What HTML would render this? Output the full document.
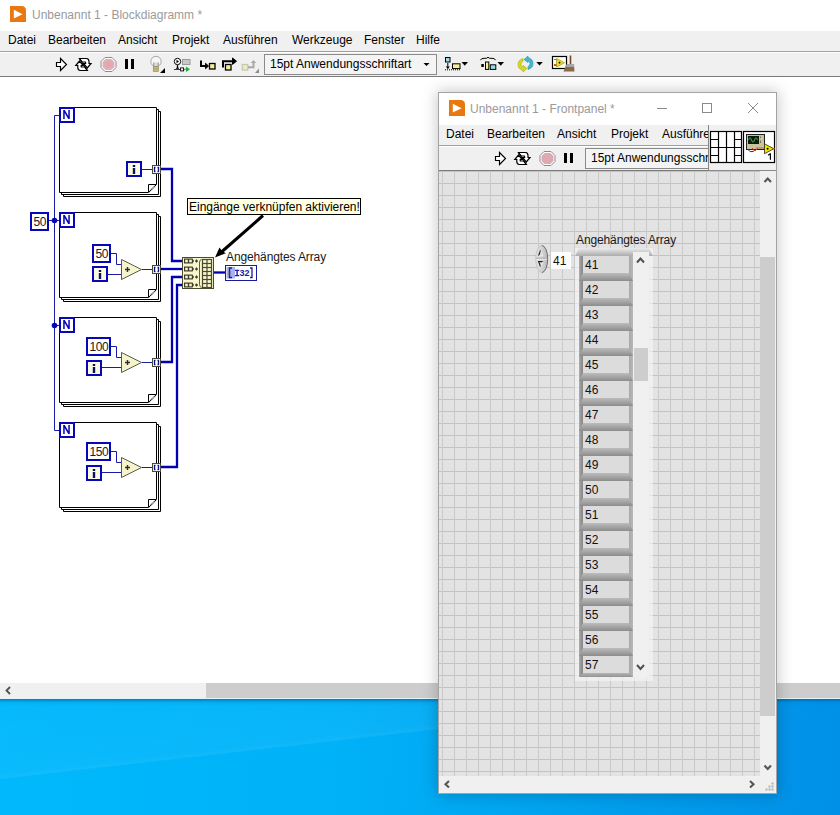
<!DOCTYPE html>
<html><head><meta charset="utf-8">
<style>
*{box-sizing:border-box}
html,body{margin:0;padding:0}
body{width:840px;height:815px;position:relative;overflow:hidden;background:#fff;font-family:"Liberation Sans",sans-serif;font-size:12px;color:#000}
.a{position:absolute}
.t{position:absolute;white-space:nowrap;line-height:14px;font-size:12px}
</style></head><body>

<!-- ============ BLOCK DIAGRAM WINDOW ============ -->
<div class="a" style="left:0;top:0;width:840px;height:31px;background:#fff"></div>
<svg class="a" style="left:10px;top:6px" width="16" height="16" viewBox="0 0 16 16"><path d="M0 0H11.5Q16 0 16 4.5V16H0Z" fill="#e8780f"/><path d="M3.8 3.8L12.6 8.2L3.8 12.6Z" fill="#fff"/></svg>
<div class="t" style="left:32px;top:8px;color:#9a9a9a">Unbenannt 1 - Blockdiagramm *</div>

<div class="a" style="left:0;top:31px;width:840px;height:20px;background:#f0f0f0"></div>
<div class="t" style="left:8px;top:33px">Datei</div>
<div class="t" style="left:48px;top:33px">Bearbeiten</div>
<div class="t" style="left:118px;top:33px">Ansicht</div>
<div class="t" style="left:172px;top:33px">Projekt</div>
<div class="t" style="left:223px;top:33px">Ausführen</div>
<div class="t" style="left:292px;top:33px">Werkzeuge</div>
<div class="t" style="left:364px;top:33px">Fenster</div>
<div class="t" style="left:416px;top:33px">Hilfe</div>

<div class="a" style="left:0;top:51px;width:840px;height:1px;background:#a0a0a0"></div>
<div class="a" style="left:0;top:52px;width:840px;height:24px;background:#f0f0f0;border-top:1px solid #fff"></div>
<div class="a" style="left:0;top:76px;width:840px;height:1px;background:#7a7a7a"></div>

<!-- toolbar icons -->
<svg class="a" style="left:0;top:52px" width="600" height="24" viewBox="0 52 600 24">
 <!-- run -->
 <path d="M56.5 62.5H60.5V58.5L66.5 64.5L60.5 70.5V66.5H56.5Z" fill="#fff" stroke="#000" stroke-width="1.15"/>
 <!-- run continuously -->
 <g fill="#fff" stroke="#000" stroke-width="1.2" stroke-linejoin="miter">
  <path d="M79.5 58.5H86.5Q89 58.8 89 61.5V63.5H91L87.3 68L83.6 63.5H85.6V62.3Q85.6 62 85 62H82.3Z"/>
  <path d="M87.3 70.5H80.3Q77.8 70.2 77.8 67.5V65.5H75.8L79.5 61L83.2 65.5H81.2V66.7Q81.2 67 81.8 67H84.5Z"/>
 </g>
 <path d="M79.3 58.3L87.5 70.7" stroke="#000" stroke-width="1.1"/>
 <!-- abort -->
 <defs><radialGradient id="stopg" cx="0.5" cy="0.5" r="0.6"><stop offset="0" stop-color="#e8a0a8"/><stop offset="1" stop-color="#d8b8bc"/></radialGradient></defs>
 <path d="M105 57.5H112L116 61.5V67.5L112 71.5H105L101 67.5V61.5Z" fill="#fff" stroke="#8c8c8c" stroke-width="1"/>
 <path d="M105.6 59H111.4L114.5 62.1V66.9L111.4 70H105.6L102.5 66.9V62.1Z" fill="url(#stopg)"/>
 <!-- pause -->
 <rect x="125" y="59" width="3" height="10" fill="#000"/><rect x="131" y="59" width="3" height="10" fill="#000"/>
 <!-- bulb -->
 <circle cx="156" cy="61.5" r="5.2" fill="#f6f6f6" stroke="#a8a8a8" stroke-width="1"/>
 <path d="M153.8 62.5V66.5H158.2V62.5" fill="#dcdcdc" stroke="#909090" stroke-width="1"/>
 <rect x="153.3" y="66.8" width="5" height="4.6" fill="#d0c880" stroke="#9a9058" stroke-width="0.7"/><path d="M153.3 68.4H158.3M153.3 69.9H158.3" stroke="#9a9058" stroke-width="0.6"/>
 <path d="M160 73H165V68Z" fill="#000"/>
 <!-- retain wire values -->
 <circle cx="177.5" cy="61.5" r="3.2" fill="#fff" stroke="#000" stroke-width="1"/>
 <path d="M176.5 59.8L179 61.5L176.5 63.2Z" fill="#000"/>
 <rect x="182.5" y="59.5" width="7.5" height="5" fill="#c8c8c8" stroke="#9a9a9a" stroke-width="1"/>
 <path d="M177.5 65V68.5" stroke="#000" stroke-width="1.2"/><path d="M176 68.2H179" stroke="#000" stroke-width="1"/>
 <path d="M174 69.5H180.5" stroke="#2030a0" stroke-width="1"/>
 <rect x="180.6" y="67.9" width="3" height="3" fill="#fff" stroke="#000" stroke-width="0.9"/>
 <path d="M184 69.3H186.5" stroke="#20a030" stroke-width="1"/><path d="M186 66.5L190 69.3L186 72Z" fill="#20b030"/>
 <!-- step into -->
 <path d="M201 60.5V66H206" fill="none" stroke="#000" stroke-width="2"/><path d="M205.5 63.3L208.5 66L205.5 68.7Z" fill="#000" stroke="#000" stroke-width="1"/>
 <rect x="209.5" y="63.5" width="5.5" height="5.5" fill="#f4f098" stroke="#000" stroke-width="1.3"/>
 <!-- step over -->
 <path d="M223 67.5V61.2H233" fill="none" stroke="#000" stroke-width="2"/><path d="M232.5 58L236.5 61.2L232.5 64.4Z" fill="#000" stroke="#000" stroke-width="1"/>
 <rect x="225.5" y="64.5" width="5.5" height="5.5" fill="#f4f098" stroke="#000" stroke-width="1.3"/>
 <!-- step out disabled -->
 <rect x="242.3" y="64.5" width="5.5" height="5.5" fill="#ecebc8" stroke="#c8c8b0" stroke-width="1.3"/>
 <path d="M248 67.3H253.5V62.5" fill="none" stroke="#a8a8a8" stroke-width="2"/><path d="M250.7 63L253.5 60L256.3 63Z" fill="#a8a8a8"/>
 <path d="M255 73H259V68.5Z" fill="#8c8c8c"/>
 <!-- dropdown -->
 <rect x="264.5" y="54.5" width="172" height="20" fill="#f4f4f4" stroke="#8a8a8a" stroke-width="1"/>
 <path d="M423.5 63H429.5L426.5 66Z" fill="#000"/>
 <!-- align -->
 <rect x="445.5" y="57.5" width="4.5" height="4.5" fill="#98dce6" stroke="#000" stroke-width="1"/>
 <path d="M447.8 63V68.5" stroke="#000" stroke-width="1"/><path d="M445.8 66.5L447.8 69L449.8 66.5Z" fill="#000"/>
 <rect x="452.5" y="63.8" width="7.5" height="4.8" fill="#f4f098" stroke="#000" stroke-width="1"/>
 <path d="M445 69.8H460" stroke="#000" stroke-width="1" stroke-dasharray="1 1"/>
 <path d="M461.5 62H468L464.75 65.7Z" fill="#000"/>
 <!-- distribute -->
 <path d="M480.5 60.2Q481 58.3 484 58.3H486.5L488 57.2L489.5 58.3H492Q495 58.3 495.5 60.2" fill="none" stroke="#000" stroke-width="1"/>
 <rect x="481.3" y="64" width="2.5" height="3" fill="#000"/>
 <rect x="485.5" y="62" width="3.3" height="7.4" fill="#f4f098" stroke="#000" stroke-width="1"/>
 <rect x="490.3" y="64.8" width="5.5" height="4.6" fill="#98dce6" stroke="#000" stroke-width="1"/>
 <path d="M497.5 62H504L500.75 65.7Z" fill="#000"/>
 <!-- reorder -->
 <path d="M523 58.5Q518 60 518 64.5Q518 69 523 70.5L523 72L527 68.5L523 65.5V67Q521 66.5 521 64.5Q521 62 523 61.5Z" fill="#d8d820" stroke="#a8a810" stroke-width="0.6"/>
 <path d="M528 69.5Q533 68 533 63.5Q533 59 528 57.5L528 56L524 59.5L528 62.5V61Q530 61.5 530 63.5Q530 66 528 66.5Z" fill="#40b8d0" stroke="#2890a8" stroke-width="0.6"/>
 <path d="M536.3 62H542.8L539.55 65.4Z" fill="#000"/>
 <!-- cleanup -->
 <rect x="552.5" y="56.5" width="14" height="12" fill="#fff" stroke="#000" stroke-width="1.2"/>
 <path d="M554 59.5H557M554 64.5H557" stroke="#c03020" stroke-width="0.8"/><path d="M554 65.5H557" stroke="#2030b0" stroke-width="0.8"/>
 <path d="M556.5 58.5V67L564.5 62.75Z" fill="#e8e020" stroke="#a09010" stroke-width="0.7"/>
 <circle cx="559.5" cy="62.7" r="0.9" fill="#000"/>
 <path d="M570.5 55.5V64" stroke="#7a4a20" stroke-width="1.6"/>
 <path d="M566.5 64H574L574.5 71.5H563.5Z" fill="#8a6a48"/>
 <path d="M567 64H574V67H566Z" fill="#a8a8a8"/>
</svg>
<div class="t" style="left:270px;top:57px">15pt Anwendungsschriftart</div>

<!-- canvas -->
<div class="a" style="left:0;top:77px;width:840px;height:606px;background:#fff"></div>
<!--BD-->
<svg class="a" style="left:0;top:77px" width="440" height="606" viewBox="0 77 440 606"><path d="M63.5 194 V196.5 H160.5 V111.5 H158" fill="none" stroke="#000" stroke-width="1"/>
<path d="M61.5 192 V194.5 H158.5 V109.5 H156" fill="none" stroke="#000" stroke-width="1"/>
<path d="M148.5 192.5 H59.5 V107.5 H156.5 V184.5" fill="#fff" stroke="#000" stroke-width="1"/>
<path d="M148.5 192.5 V184.5 H156.5" fill="none" stroke="#000" stroke-width="1"/>
<path d="M149 192 L156 185" stroke="#000" stroke-width="1.1" stroke-dasharray="1.2 0.5"/>
<rect x="60" y="108" width="14" height="14" fill="#fff" stroke="#0707b8" stroke-width="2"/>
<path d="M63.2 119 V110 H64.8 L68.3 116 V110 H69.8 V119 H68.2 L64.7 113 V119Z" fill="#0707b8"/>
<path d="M63.5 299 V301.5 H160.5 V216.5 H158" fill="none" stroke="#000" stroke-width="1"/>
<path d="M61.5 297 V299.5 H158.5 V214.5 H156" fill="none" stroke="#000" stroke-width="1"/>
<path d="M148.5 297.5 H59.5 V212.5 H156.5 V289.5" fill="#fff" stroke="#000" stroke-width="1"/>
<path d="M148.5 297.5 V289.5 H156.5" fill="none" stroke="#000" stroke-width="1"/>
<path d="M149 297 L156 290" stroke="#000" stroke-width="1.1" stroke-dasharray="1.2 0.5"/>
<rect x="60" y="213" width="14" height="14" fill="#fff" stroke="#0707b8" stroke-width="2"/>
<path d="M63.2 224 V215 H64.8 L68.3 221 V215 H69.8 V224 H68.2 L64.7 218 V224Z" fill="#0707b8"/>
<path d="M63.5 404 V406.5 H160.5 V321.5 H158" fill="none" stroke="#000" stroke-width="1"/>
<path d="M61.5 402 V404.5 H158.5 V319.5 H156" fill="none" stroke="#000" stroke-width="1"/>
<path d="M148.5 402.5 H59.5 V317.5 H156.5 V394.5" fill="#fff" stroke="#000" stroke-width="1"/>
<path d="M148.5 402.5 V394.5 H156.5" fill="none" stroke="#000" stroke-width="1"/>
<path d="M149 402 L156 395" stroke="#000" stroke-width="1.1" stroke-dasharray="1.2 0.5"/>
<rect x="60" y="318" width="14" height="14" fill="#fff" stroke="#0707b8" stroke-width="2"/>
<path d="M63.2 329 V320 H64.8 L68.3 326 V320 H69.8 V329 H68.2 L64.7 323 V329Z" fill="#0707b8"/>
<path d="M63.5 509 V511.5 H160.5 V426.5 H158" fill="none" stroke="#000" stroke-width="1"/>
<path d="M61.5 507 V509.5 H158.5 V424.5 H156" fill="none" stroke="#000" stroke-width="1"/>
<path d="M148.5 507.5 H59.5 V422.5 H156.5 V499.5" fill="#fff" stroke="#000" stroke-width="1"/>
<path d="M148.5 507.5 V499.5 H156.5" fill="none" stroke="#000" stroke-width="1"/>
<path d="M149 507 L156 500" stroke="#000" stroke-width="1.1" stroke-dasharray="1.2 0.5"/>
<rect x="60" y="423" width="14" height="14" fill="#fff" stroke="#0707b8" stroke-width="2"/>
<path d="M63.2 434 V425 H64.8 L68.3 431 V425 H69.8 V434 H68.2 L64.7 428 V434Z" fill="#0707b8"/>
<rect x="127" y="162" width="14" height="14" fill="#fbfbe4" stroke="#0707b8" stroke-width="2"/>
<rect x="132.8" y="165" width="2.4" height="2" fill="#101060"/>
<rect x="132.8" y="168" width="2.4" height="6" fill="#101060"/>
<path d="M142 169.5 H152" stroke="#1a1aa8" stroke-width="1"/>
<rect x="152.5" y="165.5" width="8" height="8" fill="#fff" stroke="#4a4a38" stroke-width="1"/>
<path d="M155.5 167.5 H154.5 V171.5 H155.5 M157.5 167.5 H158.5 V171.5 H157.5" fill="none" stroke="#101080" stroke-width="1.3"/>
<rect x="93" y="245" width="17" height="17" fill="#fff" stroke="#0707b8" stroke-width="2"/>
<text x="101.8" y="258" text-anchor="middle" font-family="Liberation Sans" font-size="12" letter-spacing="-0.4" fill="#202020">50</text>
<rect x="93" y="267" width="14" height="14" fill="#fbfbe4" stroke="#0707b8" stroke-width="2"/>
<rect x="98.8" y="270" width="2.4" height="2" fill="#101060"/>
<rect x="98.8" y="273" width="2.4" height="6" fill="#101060"/>
<path d="M121.5 259.5 L141.5 269.5 L121.5 279.5Z" fill="#f6f4cc" stroke="#5a5a48" stroke-width="1"/>
<path d="M125 269.5 H130 M127.5 267 V272" stroke="#303020" stroke-width="1.4"/>
<path d="M111 253.5 H116.5 V264.5 H121" fill="none" stroke="#1a1aa8" stroke-width="1"/>
<path d="M108 274.5 H121" stroke="#1a1aa8" stroke-width="1"/>
<path d="M142 269.5 H152" stroke="#1a1aa8" stroke-width="1"/>
<rect x="152.5" y="265.5" width="8" height="8" fill="#fff" stroke="#4a4a38" stroke-width="1"/>
<path d="M155.5 267.5 H154.5 V271.5 H155.5 M157.5 267.5 H158.5 V271.5 H157.5" fill="none" stroke="#101080" stroke-width="1.3"/>
<rect x="87" y="338" width="23" height="17" fill="#fff" stroke="#0707b8" stroke-width="2"/>
<text x="98.8" y="351" text-anchor="middle" font-family="Liberation Sans" font-size="12" letter-spacing="-0.4" fill="#202020">100</text>
<rect x="87" y="361" width="14" height="14" fill="#fbfbe4" stroke="#0707b8" stroke-width="2"/>
<rect x="92.8" y="364" width="2.4" height="2" fill="#101060"/>
<rect x="92.8" y="367" width="2.4" height="6" fill="#101060"/>
<path d="M121.5 352.5 L141.5 362.5 L121.5 372.5Z" fill="#f6f4cc" stroke="#5a5a48" stroke-width="1"/>
<path d="M125 362.5 H130 M127.5 360 V365" stroke="#303020" stroke-width="1.4"/>
<path d="M111 346.5 H116.5 V357.5 H121" fill="none" stroke="#1a1aa8" stroke-width="1"/>
<path d="M102 367.5 H121" stroke="#1a1aa8" stroke-width="1"/>
<path d="M142 362.5 H152" stroke="#1a1aa8" stroke-width="1"/>
<rect x="152.5" y="358.5" width="8" height="8" fill="#fff" stroke="#4a4a38" stroke-width="1"/>
<path d="M155.5 360.5 H154.5 V364.5 H155.5 M157.5 360.5 H158.5 V364.5 H157.5" fill="none" stroke="#101080" stroke-width="1.3"/>
<rect x="87" y="443" width="23" height="17" fill="#fff" stroke="#0707b8" stroke-width="2"/>
<text x="98.8" y="456" text-anchor="middle" font-family="Liberation Sans" font-size="12" letter-spacing="-0.4" fill="#202020">150</text>
<rect x="87" y="466" width="14" height="14" fill="#fbfbe4" stroke="#0707b8" stroke-width="2"/>
<rect x="92.8" y="469" width="2.4" height="2" fill="#101060"/>
<rect x="92.8" y="472" width="2.4" height="6" fill="#101060"/>
<path d="M121.5 457.5 L141.5 467.5 L121.5 477.5Z" fill="#f6f4cc" stroke="#5a5a48" stroke-width="1"/>
<path d="M125 467.5 H130 M127.5 465 V470" stroke="#303020" stroke-width="1.4"/>
<path d="M111 451.5 H116.5 V462.5 H121" fill="none" stroke="#1a1aa8" stroke-width="1"/>
<path d="M102 472.5 H121" stroke="#1a1aa8" stroke-width="1"/>
<path d="M142 467.5 H152" stroke="#1a1aa8" stroke-width="1"/>
<rect x="152.5" y="463.5" width="8" height="8" fill="#fff" stroke="#4a4a38" stroke-width="1"/>
<path d="M155.5 465.5 H154.5 V469.5 H155.5 M157.5 465.5 H158.5 V469.5 H157.5" fill="none" stroke="#101080" stroke-width="1.3"/>
<path d="M59 115.5 H54.5 V430.5 H59" fill="none" stroke="#1a1aa8" stroke-width="1"/>
<path d="M49 220.5 H59 M54.5 325.5 H59" fill="none" stroke="#1a1aa8" stroke-width="1"/>
<circle cx="54.5" cy="220.5" r="2.8" fill="#0707b8"/>
<circle cx="54.5" cy="325.5" r="2.8" fill="#0707b8"/>
<rect x="31" y="213" width="17" height="17" fill="#fff" stroke="#0707b8" stroke-width="2"/>
<text x="39.8" y="226" text-anchor="middle" font-family="Liberation Sans" font-size="12" letter-spacing="-0.4" fill="#202020">50</text>
<path d="M161 169 H172 V261 H182" fill="none" stroke="#0000b4" stroke-width="2.3"/>
<path d="M161 269 H182" fill="none" stroke="#0000b4" stroke-width="2.3"/>
<path d="M161 362 H172 V277 H182" fill="none" stroke="#0000b4" stroke-width="2.3"/>
<path d="M161 467 H177 V285 H182" fill="none" stroke="#0000b4" stroke-width="2.3"/>
<path d="M214 272.5 H225" fill="none" stroke="#0000b4" stroke-width="2.3"/>
<rect x="182.5" y="257.5" width="31" height="31" fill="#f8f6cc" stroke="#4a4a30" stroke-width="1"/>
<path d="M184 258.5 H192.5 L194 261 L192.5 263.5 H184Z" fill="#3e3e28"/>
<rect x="185.2" y="259.7" width="2.6" height="2.6" fill="#f8f6d8"/>
<rect x="189.2" y="259.7" width="2.6" height="2.6" fill="#f8f6d8"/>
<rect x="195" y="260.4" width="3" height="1.2" fill="#3a3a20"/>
<rect x="195.9" y="259.5" width="1.2" height="3" fill="#3a3a20"/>
<path d="M184 266.5 H192.5 L194 269 L192.5 271.5 H184Z" fill="#3e3e28"/>
<rect x="185.2" y="267.7" width="2.6" height="2.6" fill="#f8f6d8"/>
<rect x="189.2" y="267.7" width="2.6" height="2.6" fill="#f8f6d8"/>
<rect x="195" y="268.4" width="3" height="1.2" fill="#3a3a20"/>
<rect x="195.9" y="267.5" width="1.2" height="3" fill="#3a3a20"/>
<path d="M184 274.5 H192.5 L194 277 L192.5 279.5 H184Z" fill="#3e3e28"/>
<rect x="185.2" y="275.7" width="2.6" height="2.6" fill="#f8f6d8"/>
<rect x="189.2" y="275.7" width="2.6" height="2.6" fill="#f8f6d8"/>
<rect x="195" y="276.4" width="3" height="1.2" fill="#3a3a20"/>
<rect x="195.9" y="275.5" width="1.2" height="3" fill="#3a3a20"/>
<path d="M184 282.5 H192.5 L194 285 L192.5 287.5 H184Z" fill="#3e3e28"/>
<rect x="185.2" y="283.7" width="2.6" height="2.6" fill="#f8f6d8"/>
<rect x="189.2" y="283.7" width="2.6" height="2.6" fill="#f8f6d8"/>
<rect x="195" y="284.4" width="3" height="1.2" fill="#3a3a20"/>
<rect x="195.9" y="283.5" width="1.2" height="3" fill="#3a3a20"/>
<path d="M201.5 259.5 Q199.5 260 199.5 262 V284.5 Q199.5 287 201.5 287.5" fill="none" stroke="#4a4a30" stroke-width="0.9"/>
<rect x="202.5" y="259.5" width="9" height="28" fill="#f8f6cc" stroke="#4a4a30" stroke-width="1.2"/>
<path d="M207 259.5 V287.5" stroke="#4a4a30" stroke-width="1.2"/>
<path d="M202.5 263.5 H211.5" stroke="#4a4a30" stroke-width="1.2"/>
<path d="M202.5 267.5 H211.5" stroke="#4a4a30" stroke-width="1.2"/>
<path d="M202.5 271.5 H211.5" stroke="#4a4a30" stroke-width="1.2"/>
<path d="M202.5 275.5 H211.5" stroke="#4a4a30" stroke-width="1.2"/>
<path d="M202.5 279.5 H211.5" stroke="#4a4a30" stroke-width="1.2"/>
<path d="M202.5 283.5 H211.5" stroke="#4a4a30" stroke-width="1.2"/>
<rect x="225.5" y="265.5" width="31" height="15" fill="#fff" stroke="#1a1a9c" stroke-width="1"/>
<rect x="226.5" y="267" width="8.5" height="11.5" fill="#a8b0ee"/>
<path d="M232 268 H229.5 V277.5 H232 M250 268 H252 V277.5 H250" fill="none" stroke="#1a1aa0" stroke-width="1.3"/>
<path d="M229.5 271 V275" stroke="#404040" stroke-width="1.5"/>
<path d="M235 269.8H239.2V271H237.8V275H239.2V276.2H235V275H236.4V271H235Z" fill="#1a1aa0"/>
<text x="239.6" y="276.2" font-family="Liberation Sans" font-weight="bold" font-size="9" fill="#1a1aa0" letter-spacing="-0.2">32</text>
<rect x="187.5" y="198.5" width="173" height="16" fill="#ffffe1" stroke="#000" stroke-width="1"/>
<path d="M263 215.5 L221.5 252" stroke="#000" stroke-width="3"/>
<path d="M215 257.5 L219.5 247.5 L222 251 L225.8 253.2Z" fill="#000"/></svg>
<div class="t" style="left:189px;top:200px;letter-spacing:-0.02px">Eingänge verknüpfen aktivieren!</div>
<div class="t" style="left:226px;top:250px;color:#1a1a1a;letter-spacing:-0.12px">Angehängtes Array</div>
<!--/BD-->
<!-- h scrollbar -->
<div class="a" style="left:0;top:683px;width:840px;height:15px;background:#f0f0f0"></div>
<div class="a" style="left:206px;top:683px;width:634px;height:15px;background:#cdcdcd"></div>
<svg class="a" style="left:4px;top:686px" width="9" height="9"><path d="M6 1L2.5 4.5L6 8" stroke="#505050" stroke-width="1.8" fill="none"/></svg>
<!-- desktop -->
<div class="a" style="left:0;top:698px;width:840px;height:117px;overflow:hidden;background:linear-gradient(95deg,#00b9fc 0%,#00b2f8 40%,#009ded 75%,#0090e8 100%)">
<div class="a" style="left:-100px;top:-47px;width:1000px;height:140px;transform:rotate(-6.5deg);transform-origin:0 100%;background:linear-gradient(rgba(255,255,255,0) 0%,rgba(255,255,255,0.04) 96%,rgba(255,255,255,0.07) 99%,rgba(255,255,255,0) 100%)"></div>
</div>
<div class="a" style="left:0;top:698px;width:840px;height:1px;background:#dff4fb"></div>
<div class="a" style="left:0;top:699px;width:840px;height:7px;background:linear-gradient(rgba(0,80,130,0.55),rgba(0,120,190,0.15) 50%,rgba(0,150,220,0))"></div>

<!--FP-->
<div class="a" style="left:438px;top:92px;width:339px;height:702px;box-shadow:0 0 14px 1px rgba(0,0,0,0.22)"></div>
<div class="a" style="left:438px;top:92px;width:339px;height:702px;border:1px solid #a4a4a4;background:#fff"></div>
<svg class="a" style="left:449px;top:100px" width="16" height="16" viewBox="0 0 16 16"><path d="M0 0H11.5Q16 0 16 4.5V16H0Z" fill="#e8780f"/><path d="M3.8 3.8L12.6 8.2L3.8 12.6Z" fill="#fff"/></svg>
<div class="t" style="left:470px;top:102px;color:#9a9a9a">Unbenannt 1 - Frontpanel *</div>
<svg class="a" style="left:650px;top:100px" width="120" height="18" viewBox="650 100 120 18"><path d="M657 108.5H667" stroke="#8a8a8a" stroke-width="1"/><rect x="702.5" y="103.5" width="9" height="9" fill="none" stroke="#8a8a8a" stroke-width="1"/><path d="M748 103L758 113M758 103L748 113" stroke="#8a8a8a" stroke-width="1"/></svg>
<div class="a" style="left:439px;top:125px;width:337px;height:20px;background:#f0f0f0"></div>
<div class="a" style="left:439px;top:125px;width:269px;height:46px;overflow:hidden">
<div class="t" style="left:7px;top:2px">Datei</div>
<div class="t" style="left:48px;top:2px">Bearbeiten</div>
<div class="t" style="left:118px;top:2px">Ansicht</div>
<div class="t" style="left:172px;top:2px">Projekt</div>
<div class="t" style="left:223px;top:2px">Ausführen</div>
<div class="a" style="left:0;top:20px;width:269px;height:1px;background:#a0a0a0"></div>
<div class="a" style="left:0;top:21px;width:269px;height:24px;background:#f0f0f0;border-top:1px solid #fff"></div>
<div class="a" style="left:0;top:45px;width:269px;height:1px;background:#7a7a7a"></div>
<svg class="a" style="left:0;top:0" width="269" height="46" viewBox="439 125 269 46"><path d="M495.5 156.5H499.5V152.5L505.5 158.5L499.5 164.5V160.5H495.5Z" fill="#fff" stroke="#000" stroke-width="1.15"/><g fill="#fff" stroke="#000" stroke-width="1.2"><path d="M518.5 152.5H525.5Q528 152.8 528 155.5V157.5H530L526.3 162L522.6 157.5H524.6V156.3Q524.6 156 524 156H521.3Z"/><path d="M526.3 164.5H519.3Q516.8 164.2 516.8 161.5V159.5H514.8L518.5 155L522.2 159.5H520.2V160.7Q520.2 161 520.8 161H523.5Z"/></g><path d="M518.3 152.3L526.5 164.7" stroke="#000" stroke-width="1.1"/><path d="M544 151.5H551L555 155.5V161.5L551 165.5H544L540 161.5V155.5Z" fill="#fff" stroke="#8c8c8c" stroke-width="1"/><path d="M544.6 153H550.4L553.5 156.1V160.9L550.4 164H544.6L541.5 160.9V156.1Z" fill="#e0a8b0"/><rect x="564" y="153" width="3" height="10" fill="#000"/><rect x="570" y="153" width="3" height="10" fill="#000"/><rect x="585.5" y="148.5" width="140" height="20" fill="#f4f4f4" stroke="#8a8a8a" stroke-width="1"/></svg>
<div class="t" style="left:152px;top:26px">15pt Anwendungsschriftart</div>
</div>
<div class="a" style="left:708px;top:125px;width:68px;height:46px;background:#f0f0f0;border-left:1px solid #858585;border-bottom:1px solid #8a8a8a"></div>
<svg class="a" style="left:708px;top:128px" width="68" height="38" viewBox="708 128 68 38"><rect x="710.5" y="131.5" width="31" height="31" fill="#fff" stroke="#000" stroke-width="1.2"/><path d="M718.5 131.5V162.5M726.5 131.5V162.5M734.5 131.5V162.5M710.5 139.5H718.5M710.5 147.5H741.5M710.5 155.5H718.5M734.5 139.5H741.5M734.5 155.5H741.5" stroke="#000" stroke-width="1.2"/><rect x="743.5" y="131.5" width="31" height="31" fill="#fff" stroke="#000" stroke-width="1.2"/><rect x="746.5" y="134.5" width="18" height="15" fill="#c8c4a0" stroke="#202020" stroke-width="1"/><rect x="748" y="136" width="11" height="8" fill="#101810"/><path d="M748.5 140Q750 135.5 751.5 140T754.5 140T757.5 140" fill="none" stroke="#30d040" stroke-width="0.9"/><path d="M760.5 136.5V138M760.5 140.5V143" stroke="#606050" stroke-width="0.8"/><path d="M747.5 149Q750 153 753 151.5L756 149" fill="none" stroke="#2020a0" stroke-width="1"/><path d="M752 148L755 151L758 148" fill="none" stroke="#d04020" stroke-width="1"/><path d="M756 148H766" stroke="#e06030" stroke-width="1"/><path d="M764.5 143.8V153.7L773.8 148.75Z" fill="#f2e600" stroke="#404010" stroke-width="0.9"/><circle cx="767.6" cy="148.75" r="1" fill="#000"/><path d="M773.8 148.75H775" stroke="#e06030" stroke-width="1"/><path d="M767.8 154.8L769.9 153.3H771V159.8H769.8V154.8L768.4 155.8Z" fill="#000"/></svg>
<div class="a" style="left:439px;top:171px;width:321px;height:605px;background-color:#e3e3e3;background-image:linear-gradient(90deg,#c9c9c9 1px,transparent 1px),linear-gradient(#c3c3c3 1px,transparent 1px);background-size:12px 12px;background-position:3px 0px"></div>
<div class="a" style="left:760px;top:171px;width:16px;height:605px;background:#f0f0f0"></div>
<div class="a" style="left:760px;top:257px;width:15px;height:459px;background:#cdcdcd"></div>
<div class="a" style="left:439px;top:776px;width:337px;height:17px;background:#f0f0f0"></div>
<svg class="a" style="left:439px;top:171px" width="337" height="622" viewBox="439 171 337 622"><path d="M764.5 182L767.7 178.5L771 182" fill="none" stroke="#555" stroke-width="2.1"/><path d="M764.5 765.5L767.7 769L771 765.5" fill="none" stroke="#555" stroke-width="2.1"/><path d="M449 781L445.5 784.3L449 787.5" fill="none" stroke="#555" stroke-width="2.1"/><path d="M750 781L753.5 784.3L750 787.5" fill="none" stroke="#555" stroke-width="2.1"/><g fill="#b0b0b0"><rect x="771.5" y="782.5" width="2" height="2"/><rect x="768.5" y="785.5" width="2" height="2"/><rect x="771.5" y="785.5" width="2" height="2"/><rect x="765.5" y="788.5" width="2" height="2"/><rect x="768.5" y="788.5" width="2" height="2"/><rect x="771.5" y="788.5" width="2" height="2"/></g></svg>
<div class="t" style="left:576px;top:233px;color:#1a1a1a;letter-spacing:-0.12px">Angehängtes Array</div>
<svg class="a" style="left:530px;top:243px" width="45" height="32" viewBox="530 243 45 32"><defs><linearGradient id="spg" x1="0" x2="1"><stop offset="0" stop-color="#e0e0e0"/><stop offset="0.5" stop-color="#d2d2d2"/><stop offset="1" stop-color="#bcbcbc"/></linearGradient></defs><ellipse cx="541.7" cy="259" rx="6" ry="13.6" fill="url(#spg)"/><path d="M541.7 245.4A6 13.6 0 0 1 541.7 272.6" fill="none" stroke="#6a6a6a" stroke-width="1"/><path d="M541.7 245.4A6 13.6 0 0 0 541.7 272.6" fill="none" stroke="#c0c0c0" stroke-width="0.8"/><path d="M536 258.3H547.5" stroke="#a4a4a4" stroke-width="1"/><path d="M536 259.3H547" stroke="#f4f4f4" stroke-width="0.8"/><path d="M538.6 255.8L540.6 250.3" stroke="#222" stroke-width="1.1"/><path d="M540.8 250.5L542.8 255.8H538.8" fill="none" stroke="#f2f2f2" stroke-width="0.9"/><path d="M542.8 261.6H538.6L540.6 266.8" fill="none" stroke="#222" stroke-width="1.1"/><path d="M542.8 261.8L540.8 266.8" stroke="#f2f2f2" stroke-width="0.9"/><rect x="551" y="252" width="20" height="17" fill="#fdfdfd"/></svg>
<div class="t" style="left:553px;top:254px;color:#111">41</div>
<div class="a" style="left:575px;top:248px;width:78px;height:433px;background:rgba(246,246,246,0.6)"></div>
<div class="a" style="left:575px;top:248px;width:78px;height:8px;background:linear-gradient(rgba(236,236,236,0.7),#c8c8c8 55%,#acacac);clip-path:polygon(0 100%,4px 0,calc(100% - 4px) 0,100% 100%)"></div>
<div class="a" style="left:579px;top:256px;width:54px;height:421px;background:linear-gradient(90deg,#b0b0b0 0px,#949494 2px,#888888 4px,#a6a6a6 4px,#a6a6a6 50px,#a8a8a8 50px,#b8b8b8 54px)"></div>
<div class="a" style="left:583px;top:256px;width:46px;height:17px;background:#dcdcdc"></div>
<div class="a" style="left:579px;top:273px;width:54px;height:8px;background:linear-gradient(#bcbcbc,#a4a4a4 50%,#8c8c8c);clip-path:polygon(4px 0,calc(100% - 4px) 0,100% 100%,0 100%)"></div>
<div class="t" style="left:585px;top:258px;color:#111">41</div>
<div class="a" style="left:583px;top:281px;width:46px;height:17px;background:#dcdcdc"></div>
<div class="a" style="left:579px;top:298px;width:54px;height:8px;background:linear-gradient(#bcbcbc,#a4a4a4 50%,#8c8c8c);clip-path:polygon(4px 0,calc(100% - 4px) 0,100% 100%,0 100%)"></div>
<div class="t" style="left:585px;top:283px;color:#111">42</div>
<div class="a" style="left:583px;top:306px;width:46px;height:17px;background:#dcdcdc"></div>
<div class="a" style="left:579px;top:323px;width:54px;height:8px;background:linear-gradient(#bcbcbc,#a4a4a4 50%,#8c8c8c);clip-path:polygon(4px 0,calc(100% - 4px) 0,100% 100%,0 100%)"></div>
<div class="t" style="left:585px;top:308px;color:#111">43</div>
<div class="a" style="left:583px;top:331px;width:46px;height:17px;background:#dcdcdc"></div>
<div class="a" style="left:579px;top:348px;width:54px;height:8px;background:linear-gradient(#bcbcbc,#a4a4a4 50%,#8c8c8c);clip-path:polygon(4px 0,calc(100% - 4px) 0,100% 100%,0 100%)"></div>
<div class="t" style="left:585px;top:333px;color:#111">44</div>
<div class="a" style="left:583px;top:356px;width:46px;height:17px;background:#dcdcdc"></div>
<div class="a" style="left:579px;top:373px;width:54px;height:8px;background:linear-gradient(#bcbcbc,#a4a4a4 50%,#8c8c8c);clip-path:polygon(4px 0,calc(100% - 4px) 0,100% 100%,0 100%)"></div>
<div class="t" style="left:585px;top:358px;color:#111">45</div>
<div class="a" style="left:583px;top:381px;width:46px;height:17px;background:#dcdcdc"></div>
<div class="a" style="left:579px;top:398px;width:54px;height:8px;background:linear-gradient(#bcbcbc,#a4a4a4 50%,#8c8c8c);clip-path:polygon(4px 0,calc(100% - 4px) 0,100% 100%,0 100%)"></div>
<div class="t" style="left:585px;top:383px;color:#111">46</div>
<div class="a" style="left:583px;top:406px;width:46px;height:17px;background:#dcdcdc"></div>
<div class="a" style="left:579px;top:423px;width:54px;height:8px;background:linear-gradient(#bcbcbc,#a4a4a4 50%,#8c8c8c);clip-path:polygon(4px 0,calc(100% - 4px) 0,100% 100%,0 100%)"></div>
<div class="t" style="left:585px;top:408px;color:#111">47</div>
<div class="a" style="left:583px;top:431px;width:46px;height:17px;background:#dcdcdc"></div>
<div class="a" style="left:579px;top:448px;width:54px;height:8px;background:linear-gradient(#bcbcbc,#a4a4a4 50%,#8c8c8c);clip-path:polygon(4px 0,calc(100% - 4px) 0,100% 100%,0 100%)"></div>
<div class="t" style="left:585px;top:433px;color:#111">48</div>
<div class="a" style="left:583px;top:456px;width:46px;height:17px;background:#dcdcdc"></div>
<div class="a" style="left:579px;top:473px;width:54px;height:8px;background:linear-gradient(#bcbcbc,#a4a4a4 50%,#8c8c8c);clip-path:polygon(4px 0,calc(100% - 4px) 0,100% 100%,0 100%)"></div>
<div class="t" style="left:585px;top:458px;color:#111">49</div>
<div class="a" style="left:583px;top:481px;width:46px;height:17px;background:#dcdcdc"></div>
<div class="a" style="left:579px;top:498px;width:54px;height:8px;background:linear-gradient(#bcbcbc,#a4a4a4 50%,#8c8c8c);clip-path:polygon(4px 0,calc(100% - 4px) 0,100% 100%,0 100%)"></div>
<div class="t" style="left:585px;top:483px;color:#111">50</div>
<div class="a" style="left:583px;top:506px;width:46px;height:17px;background:#dcdcdc"></div>
<div class="a" style="left:579px;top:523px;width:54px;height:8px;background:linear-gradient(#bcbcbc,#a4a4a4 50%,#8c8c8c);clip-path:polygon(4px 0,calc(100% - 4px) 0,100% 100%,0 100%)"></div>
<div class="t" style="left:585px;top:508px;color:#111">51</div>
<div class="a" style="left:583px;top:531px;width:46px;height:17px;background:#dcdcdc"></div>
<div class="a" style="left:579px;top:548px;width:54px;height:8px;background:linear-gradient(#bcbcbc,#a4a4a4 50%,#8c8c8c);clip-path:polygon(4px 0,calc(100% - 4px) 0,100% 100%,0 100%)"></div>
<div class="t" style="left:585px;top:533px;color:#111">52</div>
<div class="a" style="left:583px;top:556px;width:46px;height:17px;background:#dcdcdc"></div>
<div class="a" style="left:579px;top:573px;width:54px;height:8px;background:linear-gradient(#bcbcbc,#a4a4a4 50%,#8c8c8c);clip-path:polygon(4px 0,calc(100% - 4px) 0,100% 100%,0 100%)"></div>
<div class="t" style="left:585px;top:558px;color:#111">53</div>
<div class="a" style="left:583px;top:581px;width:46px;height:17px;background:#dcdcdc"></div>
<div class="a" style="left:579px;top:598px;width:54px;height:8px;background:linear-gradient(#bcbcbc,#a4a4a4 50%,#8c8c8c);clip-path:polygon(4px 0,calc(100% - 4px) 0,100% 100%,0 100%)"></div>
<div class="t" style="left:585px;top:583px;color:#111">54</div>
<div class="a" style="left:583px;top:606px;width:46px;height:17px;background:#dcdcdc"></div>
<div class="a" style="left:579px;top:623px;width:54px;height:8px;background:linear-gradient(#bcbcbc,#a4a4a4 50%,#8c8c8c);clip-path:polygon(4px 0,calc(100% - 4px) 0,100% 100%,0 100%)"></div>
<div class="t" style="left:585px;top:608px;color:#111">55</div>
<div class="a" style="left:583px;top:631px;width:46px;height:17px;background:#dcdcdc"></div>
<div class="a" style="left:579px;top:648px;width:54px;height:8px;background:linear-gradient(#bcbcbc,#a4a4a4 50%,#8c8c8c);clip-path:polygon(4px 0,calc(100% - 4px) 0,100% 100%,0 100%)"></div>
<div class="t" style="left:585px;top:633px;color:#111">56</div>
<div class="a" style="left:583px;top:656px;width:46px;height:17px;background:#dcdcdc"></div>
<div class="a" style="left:579px;top:673px;width:54px;height:4px;background:linear-gradient(#b4b4b4,#929292);clip-path:polygon(4px 0,calc(100% - 4px) 0,100% 100%,0 100%)"></div>
<div class="t" style="left:585px;top:658px;color:#111">57</div>
<div class="a" style="left:633px;top:252px;width:16px;height:425px;background:#f0f0f0"></div>
<div class="a" style="left:634px;top:348px;width:14px;height:33px;background:#cdcdcd"></div>
<svg class="a" style="left:633px;top:252px" width="16" height="425" viewBox="633 252 16 425"><path d="M637 262.5L640.5 258.5L644 262.5" fill="none" stroke="#505050" stroke-width="2"/><path d="M637 665L640.5 669L644 665" fill="none" stroke="#505050" stroke-width="2"/></svg>
<!--/FP-->
</body></html>
